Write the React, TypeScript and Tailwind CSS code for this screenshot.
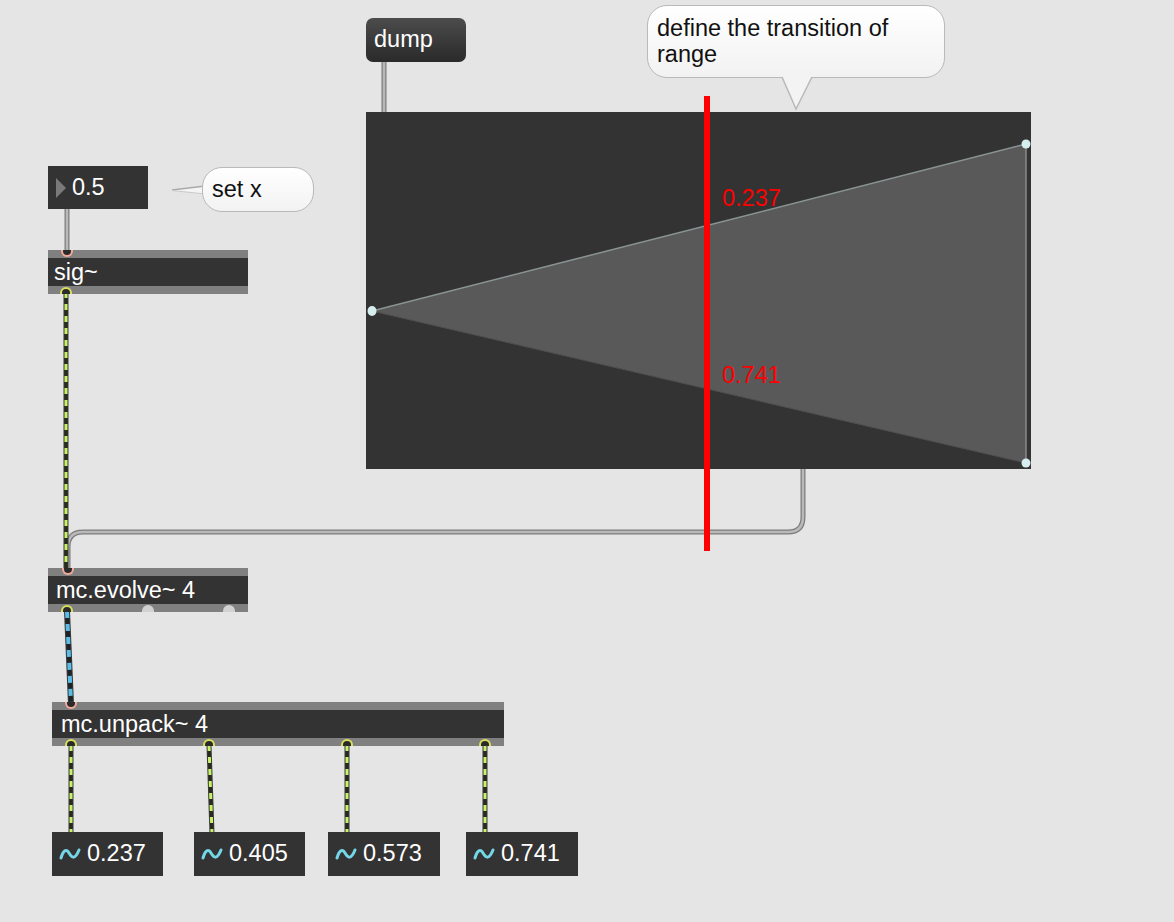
import React from "react";

function SigCord({ d }: { d: string }) {
  return (
    <g fill="none">
      <path d={d} stroke="#3a3a3a" strokeWidth={5} />
      <path d={d} stroke="#262b1b" strokeWidth={3} />
      <path d={d} stroke="#c8f26a" strokeWidth={3} strokeDasharray="6 6" />
    </g>
  );
}

function McCord({ d }: { d: string }) {
  return (
    <g fill="none">
      <path d={d} stroke="#3a3a3a" strokeWidth={6} />
      <path d={d} stroke="#1f2326" strokeWidth={4} />
      <path d={d} stroke="#5bbde6" strokeWidth={4} strokeDasharray="7 6" />
    </g>
  );
}

function CtlCord({ d }: { d: string }) {
  return (
    <g fill="none">
      <path d={d} stroke="#7d7d7d" strokeWidth={5} />
      <path d={d} stroke="#b9b9b9" strokeWidth={2.5} />
    </g>
  );
}

function Wave() {
  return (
    <svg width="22" height="14" viewBox="0 0 22 14" className="shrink-0">
      <path d="M2 11 C 4 4, 7 1, 10 6 S 16 13, 20 3" stroke="#74d6e6" strokeWidth={3} fill="none" strokeLinecap="round" />
    </svg>
  );
}

export default function App() {
  return (
    <div className="relative w-[1174px] h-[922px] overflow-hidden bg-[#e5e5e5] font-['Liberation_Sans',Arial,sans-serif] text-[23.5px]">
      {/* patch cords */}
      <svg className="absolute inset-0 pointer-events-none" width="1174" height="922">
        <CtlCord d="M384 60 V113" />
        <CtlCord d="M67 208 V252" />
        <CtlCord d="M803 469 V517 Q803 532 788 532 H83 Q68 532 68 547 V570" />
        <SigCord d="M66 292 L66 570" />
        <McCord d="M67 611 L71 704" />
        <SigCord d="M71 745 V834" />
        <SigCord d="M209 745 L212 834" />
        <SigCord d="M347 745 V834" />
        <SigCord d="M485 745 V834" />
      </svg>

      {/* dump message */}
      <div className="absolute left-[366px] top-[18px] w-[100px] h-[44px] rounded-[7px] bg-gradient-to-b from-[#4c4c4c] to-[#2a2a2a] text-white flex items-center pl-[8px]">
        dump
      </div>

      {/* comment bubble: define */}
      <div className="absolute left-[647px] top-[5px] w-[298px] h-[73px] rounded-[20px] border-[1.5px] border-[#b9b9b9] bg-gradient-to-b from-white to-[#f2f2f2] text-[#111] leading-[26px] pl-[9px] pt-[9px]">
        define the transition of
        <br />
        range
      </div>
      <svg className="absolute left-[780px] top-[76px]" width="34" height="36">
        <polygon points="2,0 32,0 16,33" fill="#f3f3f3" />
        <polyline points="2,1 16,33 32,1" fill="none" stroke="#b9b9b9" strokeWidth={1.5} />
      </svg>

      {/* function panel */}
      <div className="absolute left-[366px] top-[112px] w-[665px] h-[357px] bg-[#333333]">
        <svg width="665" height="357" className="absolute inset-0">
          <polygon points="6,199 660,32 660,351" fill="#595959" />
          <line x1="6" y1="199" x2="660" y2="32" stroke="#8a9494" strokeWidth={1.5} />
          <line x1="6" y1="199" x2="660" y2="351" stroke="#4f4f4f" strokeWidth={1} />
          <line x1="660" y1="32" x2="660" y2="351" stroke="#8a8a8a" strokeWidth={1.5} />
          <ellipse cx="6" cy="199" rx="4.5" ry="5" fill="#d6eef0" />
          <circle cx="660" cy="32" r="4.5" fill="#d6eef0" />
          <circle cx="660" cy="351" r="4.5" fill="#d6eef0" />
        </svg>
      </div>

      {/* red transition line and values */}
      <div className="absolute left-[704px] top-[96px] w-[6px] h-[455px] bg-[#ff0000]" />
      <div className="absolute left-[722px] top-[187px] leading-none text-[#ff0000]">0.237</div>
      <div className="absolute left-[722px] top-[364px] leading-none text-[#ff0000]">0.741</div>

      {/* number box 0.5 */}
      <div className="absolute left-[48px] top-[166px] w-[100px] h-[43px] bg-[#333333] text-white flex items-center">
        <svg width="24" height="22" className="shrink-0">
          <polygon points="8,1 18,11 8,21" fill="#7a7a7a" />
        </svg>
        <span>0.5</span>
      </div>

      {/* comment bubble: set x */}
      <svg className="absolute left-[170px] top-[183px]" width="36" height="14">
        <polygon points="2,7 35,2 35,12" fill="#f4f4f4" />
        <polyline points="2,7 35,3" fill="none" stroke="#a9a9a9" strokeWidth={1.5} />
        <polyline points="2,7.5 35,11" fill="none" stroke="#c8c8c8" strokeWidth={1} />
      </svg>
      <div className="absolute left-[202px] top-[167px] w-[112px] h-[45px] rounded-[20px] border-[1.5px] border-[#b9b9b9] bg-gradient-to-b from-white to-[#f2f2f2] text-[#111] flex items-center pl-[9px]">
        set x
      </div>

      {/* sig~ */}
      <div className="absolute left-[48px] top-[250px] w-[200px] h-[44px] bg-[#808080] pt-[8px]">
        <div className="h-[28px] bg-[#333333] text-white leading-[28px] pl-[6px]">sig~</div>
        <div className="absolute left-[13px] top-0 w-[12px] h-[7px] rounded-b-full border-2 border-t-0 border-[#f3a99c] bg-[#2a2a2a]" />
        <div className="absolute left-[12px] bottom-0 w-[12px] h-[7px] rounded-t-full border-2 border-b-0 border-[#d9e05c] bg-[#2a2a2a]" />
      </div>

      {/* mc.evolve~ 4 */}
      <div className="absolute left-[48px] top-[568px] w-[200px] h-[44px] bg-[#808080] pt-[8px]">
        <div className="h-[28px] bg-[#333333] text-white leading-[28px] pl-[8px]">mc.evolve~ 4</div>
        <div className="absolute left-[14px] top-0 w-[12px] h-[7px] rounded-b-full border-2 border-t-0 border-[#f3a99c] bg-[#2a2a2a]" />
        <div className="absolute left-[13px] bottom-0 w-[12px] h-[7px] rounded-t-full border-2 border-b-0 border-[#d9e05c] bg-[#2a2a2a]" />
        <div className="absolute left-[94px] bottom-0 w-[12px] h-[7px] rounded-t-full bg-[#d2d2d2]" />
        <div className="absolute left-[175px] bottom-0 w-[12px] h-[7px] rounded-t-full bg-[#d2d2d2]" />
      </div>

      {/* mc.unpack~ 4 */}
      <div className="absolute left-[52px] top-[702px] w-[452px] h-[44px] bg-[#808080] pt-[8px]">
        <div className="h-[28px] bg-[#333333] text-white leading-[28px] pl-[9px]">mc.unpack~ 4</div>
        <div className="absolute left-[13px] top-0 w-[12px] h-[7px] rounded-b-full border-2 border-t-0 border-[#f3a99c] bg-[#2a2a2a]" />
        <div className="absolute left-[13px] bottom-0 w-[12px] h-[7px] rounded-t-full border-2 border-b-0 border-[#d9e05c] bg-[#2a2a2a]" />
        <div className="absolute left-[151px] bottom-0 w-[12px] h-[7px] rounded-t-full border-2 border-b-0 border-[#d9e05c] bg-[#2a2a2a]" />
        <div className="absolute left-[289px] bottom-0 w-[12px] h-[7px] rounded-t-full border-2 border-b-0 border-[#d9e05c] bg-[#2a2a2a]" />
        <div className="absolute left-[427px] bottom-0 w-[12px] h-[7px] rounded-t-full border-2 border-b-0 border-[#d9e05c] bg-[#2a2a2a]" />
      </div>

      {/* number~ boxes */}
      <div className="absolute left-[52px] top-[832px] w-[111px] h-[44px] bg-[#333333] text-white flex items-center gap-[6px] pl-[7px]">
        <Wave />
        <span>0.237</span>
      </div>
      <div className="absolute left-[194px] top-[832px] w-[111px] h-[44px] bg-[#333333] text-white flex items-center gap-[6px] pl-[7px]">
        <Wave />
        <span>0.405</span>
      </div>
      <div className="absolute left-[328px] top-[832px] w-[112px] h-[44px] bg-[#333333] text-white flex items-center gap-[6px] pl-[7px]">
        <Wave />
        <span>0.573</span>
      </div>
      <div className="absolute left-[466px] top-[832px] w-[112px] h-[44px] bg-[#333333] text-white flex items-center gap-[6px] pl-[7px]">
        <Wave />
        <span>0.741</span>
      </div>
    </div>
  );
}
